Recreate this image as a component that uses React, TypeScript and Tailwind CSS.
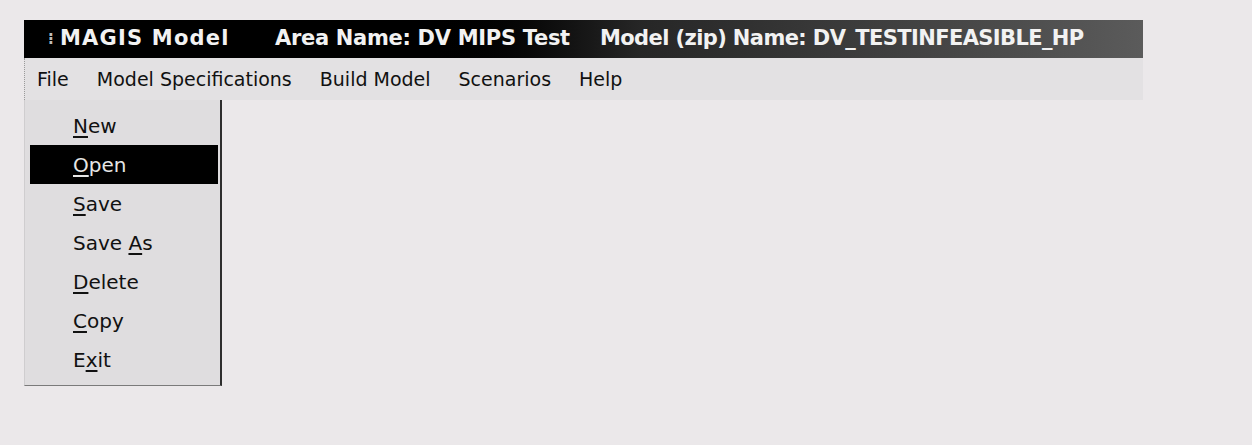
const menus = ['File', 'Model Specifications', 'Build Model', 'Scenarios', 'Help'];

// label split around the mnemonic letter: [before, key, after]
const fileItems: [string, string, string][] = [
  ['', 'N', 'ew'],
  ['', 'O', 'pen'],
  ['', 'S', 'ave'],
  ['Save ', 'A', 's'],
  ['', 'D', 'elete'],
  ['', 'C', 'opy'],
  ['E', 'x', 'it'],
];

function TitleBar() {
  return (
    <div className="h-[38px] flex items-center bg-linear-to-r from-black from-35% via-[#262626] via-55% to-[#5b5b5b] text-[#f2f2f2] font-bold text-[21px] [font-family:'DejaVu_Sans',sans-serif] whitespace-nowrap">
      <span className="w-[36px] pl-[24px] text-[#bdbdbd] text-[15px]">⁝</span>
      <span className="w-[215px] tracking-[1.2px]">MAGIS Model</span>
      <span className="w-[325px] tracking-[-0.3px]">Area Name: DV MIPS Test</span>
      <span className="tracking-[-0.6px]">Model (zip) Name: DV_TESTINFEASIBLE_HP</span>
    </div>
  );
}

function MenuBar() {
  return (
    <div className="h-[42px] flex items-center gap-[28px] pl-[12px] bg-[#e3e1e3] border-l border-dotted border-[#9a9a9a] text-[19px] text-[#111] [font-family:'DejaVu_Sans',sans-serif]">
      {menus.map((m) => (
        <span key={m}>{m}</span>
      ))}
    </div>
  );
}

function FileMenu() {
  return (
    <div className="absolute left-0 top-0 w-[198px] h-[286px] bg-[#dfdddf] border-l border-[#cfcdcf] border-r-2 border-r-[#2e2e2e] border-b border-b-[#7a7a7a] pt-[6px] text-[20px] text-[#111] [font-family:'DejaVu_Sans',sans-serif]">
      {fileItems.map(([pre, key, post], i) => {
        const active = i === 1;
        return (
          <div
            key={i}
            className={
              'h-[39px] flex items-center ml-[5px] mr-[2px] pl-[43px] ' +
              (active ? 'bg-black text-[#e6e6e6]' : '')
            }
          >
            <span className="whitespace-pre">
              {pre}
              <span className="underline underline-offset-[3px]">{key}</span>
              {post}
            </span>
          </div>
        );
      })}
    </div>
  );
}

export default function App() {
  return (
    <div className="w-[1252px] h-[445px] bg-[#ebe8ea] pt-[20px] pl-[24px] overflow-hidden">
      <div className="w-[1119px]">
        <TitleBar />
        <MenuBar />
        <div className="relative h-[300px]">
          <FileMenu />
        </div>
      </div>
    </div>
  );
}
